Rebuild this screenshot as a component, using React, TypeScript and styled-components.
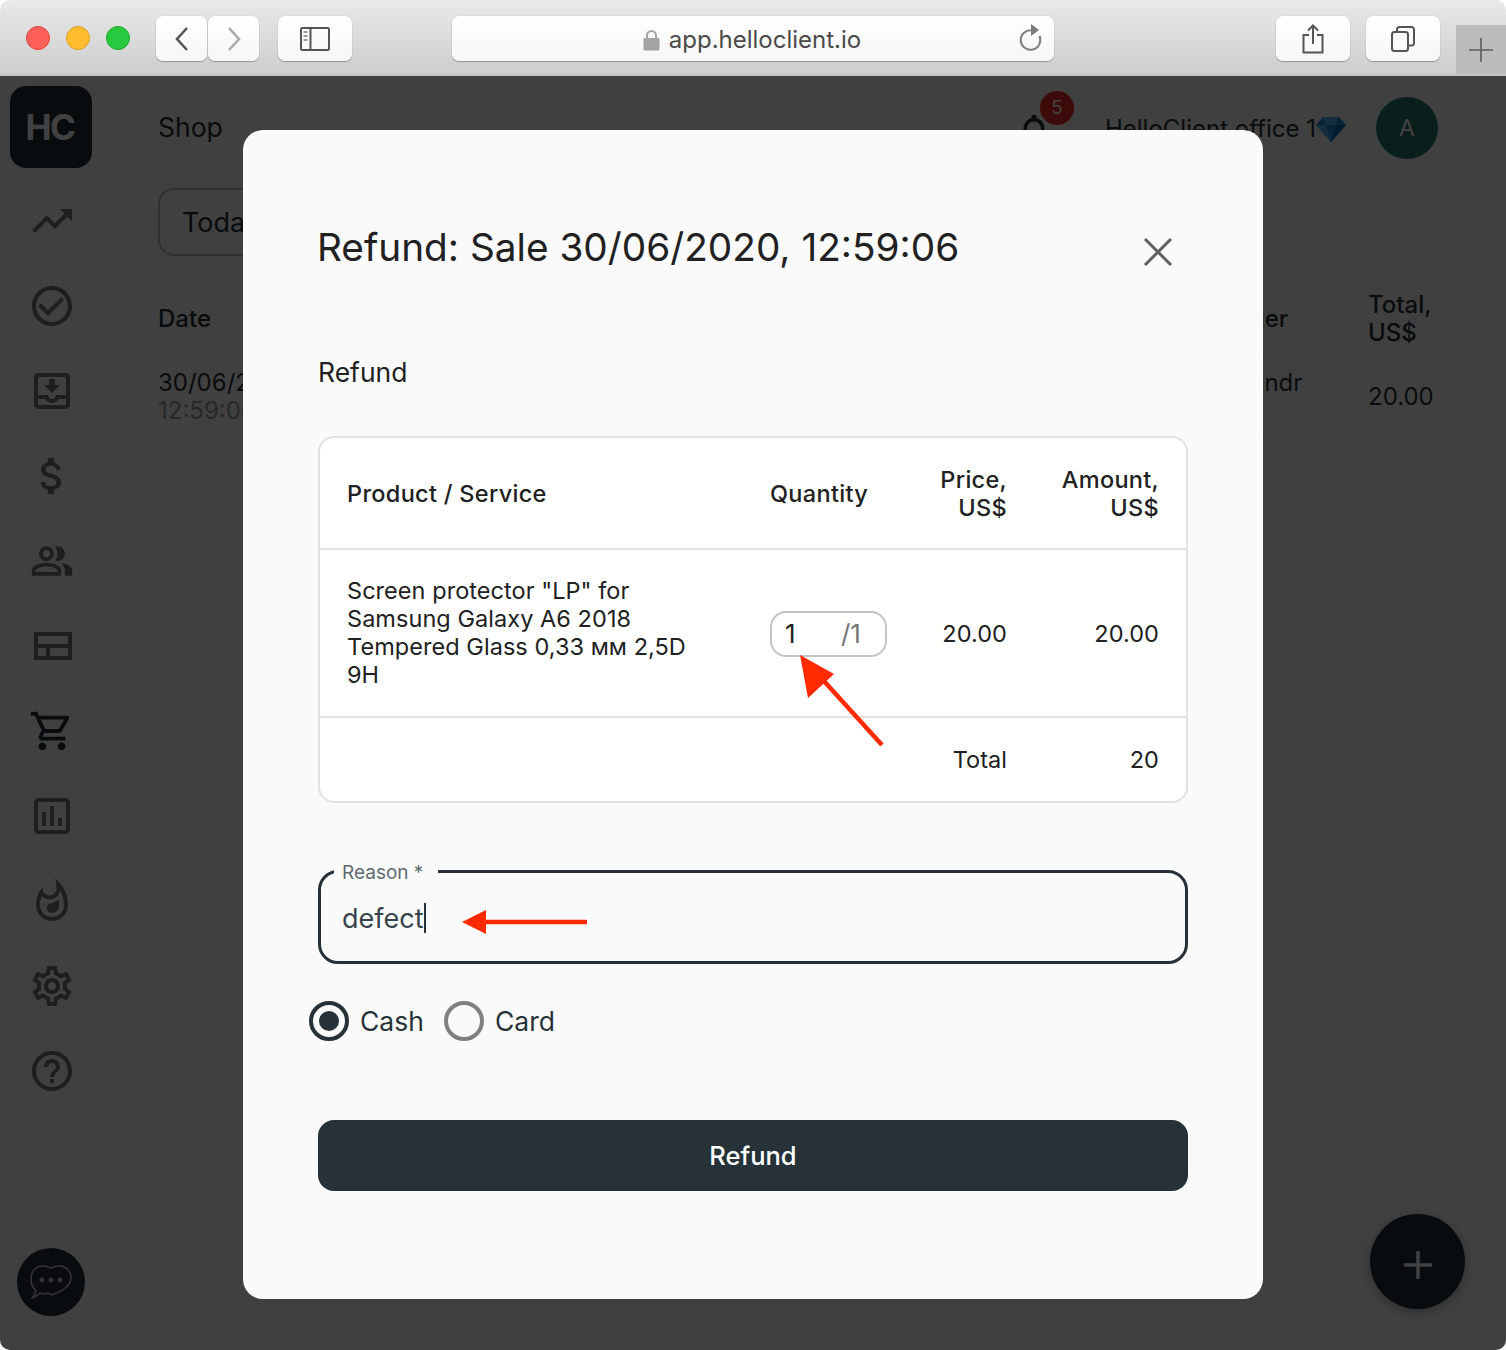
import React from 'react';
import styled, { createGlobalStyle } from 'styled-components';
import {
  MdTrendingUp,
  MdCheckCircleOutline,
  MdOutlineMoveToInbox,
  MdAttachMoney,
  MdOutlinePeopleAlt,
  MdOutlineShoppingCart,
  MdOutlineAssessment,
  MdOutlineWhatshot,
  MdOutlineSettings,
  MdHelpOutline,
  MdOutlineNotifications,
} from 'react-icons/md';

const GlobalStyle = createGlobalStyle`
  html, body {
    margin: 0;
    background: #fff;
  }
  * {
    box-sizing: border-box;
  }
`;

const BrowserWindow = styled.div`
  width: 1506px;
  height: 1350px;
  border-radius: 10px;
  overflow: hidden;
  display: flex;
  flex-direction: column;
  font-family: Inter, "Liberation Sans", sans-serif;
  color: #263238;
`;

const Toolbar = styled.div`
  height: 76px;
  flex: none;
  display: flex;
  align-items: flex-start;
  padding: 16px 0 0 26px;
  background: linear-gradient(#e9e9e9, #cdcdcd);
  border-bottom: 2px solid #c4c4c4;
`;

const Light = styled.span<{ $color: string; $edge: string }>`
  width: 24px;
  height: 24px;
  margin: 10px 16px 0 0;
  border-radius: 50%;
  background: ${({ $color }) => $color};
  border: 1px solid ${({ $edge }) => $edge};
`;

const ToolButton = styled.div<{ $width: number; $gap?: number }>`
  width: ${({ $width }) => $width}px;
  height: 45px;
  margin-left: ${({ $gap }) => $gap || 0}px;
  display: flex;
  align-items: center;
  justify-content: center;
  background: linear-gradient(#ffffff, #f6f6f6);
  border-radius: 7px;
  box-shadow: 0 1px 1px rgba(0, 0, 0, 0.28), 0 0 1px rgba(0, 0, 0, 0.25);
`;

const AddressBar = styled(ToolButton)`
  position: relative;
  gap: 9px;
  padding: 2px 2px 0 0;
  font-size: 24px;
  color: #4a4a4a;
`;

const Reload = styled.svg`
  position: absolute;
  right: 11px;
  top: 8px;
`;

const NewTab = styled.div`
  margin-left: auto;
  margin-top: 9px;
  width: 50px;
  height: 49px;
  display: flex;
  align-items: center;
  justify-content: center;
  background: #bcbcbc;
`;

const AppBody = styled.div`
  position: relative;
  flex: 1;
  display: flex;
  background: #fafafa;
`;

const Sidebar = styled.nav`
  width: 104px;
  flex: none;
  display: flex;
  flex-direction: column;
  align-items: center;
  padding: 10px 0 34px;
  border-right: 2px solid #f3f3f3;
`;

const Logo = styled.div`
  width: 82px;
  height: 82px;
  margin-bottom: 10px;
  padding-right: 2px;
  display: flex;
  align-items: center;
  justify-content: center;
  border-radius: 16px;
  background: #263238;
  color: #fff;
  font-size: 35px;
  font-weight: 700;
  letter-spacing: -1.5px;
`;

const NavItem = styled.div<{ $active?: boolean; $size: number }>`
  height: 85px;
  flex: none;
  display: flex;
  align-items: center;
  justify-content: center;
  margin-left: 2px;
  font-size: ${({ $size }) => $size}px;
  color: ${({ $active }) => ($active ? '#263238' : '#757575')};
`;

const ChatButton = styled.div`
  margin-top: auto;
  width: 68px;
  height: 68px;
  display: flex;
  align-items: center;
  justify-content: center;
  border-radius: 50%;
  background: #263238;
`;

const Main = styled.main`
  flex: 1;
  padding: 0 28px;
`;

const Header = styled.header`
  height: 103px;
  display: flex;
  align-items: center;
  padding: 0 40px 0 26px;
`;

const PageTitle = styled.div`
  font-size: 26.5px;
  flex: 1;
  margin-bottom: 2px;
`;

const Bell = styled.div`
  position: relative;
  font-size: 42px;
  height: 42px;
  margin-top: 6px;
  color: #263238;
`;

const BellBadge = styled.span`
  position: absolute;
  left: 27px;
  top: -19px;
  width: 34px;
  height: 34px;
  display: flex;
  align-items: center;
  justify-content: center;
  border-radius: 50%;
  background: #f02727;
  color: #fff;
  font-size: 19px;
`;

const Office = styled.div`
  display: flex;
  align-items: center;
  margin: 2px 0 0 50px;
  font-size: 24px;
`;

const Avatar = styled.div`
  width: 62px;
  height: 62px;
  margin-left: 30px;
  display: flex;
  align-items: center;
  justify-content: center;
  border-radius: 50%;
  background: #277a6e;
  color: #fff;
  font-size: 23px;
`;

const FilterBox = styled.div`
  width: 300px;
  height: 68px;
  margin: 9px 0 0 26px;
  padding: 0 22px;
  display: flex;
  align-items: center;
  border: 2px solid #bdbdbd;
  border-radius: 16px;
  font-size: 27px;
`;

const SalesRow = styled.div<{ $head?: boolean }>`
  display: grid;
  grid-template-columns: 1044px 166px 1fr;
  align-items: center;
  height: ${({ $head }) => ($head ? 102 : 80)}px;
  padding-left: 26px;
  border-bottom: 2px solid #eeeeee;
  font-size: 24px;
  line-height: 28px;
  font-weight: ${({ $head }) => ($head ? 500 : 400)};
`;

const Muted = styled.div`
  color: #9e9e9e;
`;

const HeadCell = styled.div`
  margin-top: 26px;
`;

const CustomerHead = styled(HeadCell)`
  margin-left: -26px;
`;

const CustomerCell = styled.div`
  align-self: start;
  margin-top: 11px;
`;

const Fab = styled.div`
  position: absolute;
  right: 41px;
  bottom: 41px;
  width: 95px;
  height: 95px;
  display: flex;
  align-items: center;
  justify-content: center;
  border-radius: 50%;
  background: #263238;
  box-shadow: 0 3px 12px rgba(0, 0, 0, 0.3);
`;

const FabPlus = styled.svg`
  margin-top: 7px;
`;

const Overlay = styled.div`
  position: absolute;
  inset: 0;
  display: flex;
  justify-content: center;
  align-items: flex-start;
  padding-top: 54px;
  background: rgba(0, 0, 0, 0.745);
`;

const Modal = styled.section`
  position: relative;
  width: 1020px;
  height: 1169px;
  padding: 0 75px;
  background: #fafafa;
  border-radius: 20px;
  overflow: hidden;
`;

const TitleRow = styled.div`
  display: flex;
  align-items: center;
  justify-content: space-between;
  height: 72px;
  margin-top: 80px;
  padding-right: 15px;
`;

const Title = styled.h2`
  margin: 0 0 0 -1px;
  font-size: 38.75px;
  font-weight: 400;
  color: #212121;
`;

const CloseIcon = styled.svg`
  margin-top: 11px;
`;

const SectionLabel = styled.div`
  margin-top: 70px;
  height: 40px;
  line-height: 40px;
  font-size: 26.5px;
  color: #212121;
`;

const RefundTable = styled.div`
  margin-top: 44px;
  width: 870px;
  border: 2px solid #e2e2e2;
  border-radius: 16px;
  background: #fff;
  font-size: 23.5px;
  line-height: 28px;
  color: #212121;
`;

const TableRow = styled.div<{ $height: number; $head?: boolean; $last?: boolean }>`
  display: grid;
  grid-template-columns: 423px 117px 120px 1fr;
  align-items: center;
  height: ${({ $height }) => $height}px;
  padding: ${({ $last }) => ($last ? 0 : 1)}px 27px 0 27px;
  border-bottom: ${({ $last }) => ($last ? 'none' : '2px solid #e2e2e2')};
  font-weight: ${({ $head }) => ($head ? 500 : 400)};
  letter-spacing: ${({ $head }) => ($head ? '0.3px' : '0.05px')};
`;

const ProductName = styled.div`
  width: 345px;
  margin-bottom: 2px;
`;

const NumberCell = styled.div`
  text-align: right;
`;

const TotalSpacer = styled.div`
  grid-column: 1 / span 2;
`;

const QuantityPill = styled.div`
  width: 117px;
  height: 46px;
  padding: 0 24px 0 13px;
  display: flex;
  align-items: center;
  justify-content: space-between;
  border: 2px solid #c4c4c4;
  border-radius: 16px;
  font-size: 26px;
`;

const QuantityMax = styled.span`
  color: #757575;
`;

const ReasonField = styled.fieldset`
  margin: 55px 0 0;
  width: 870px;
  height: 106px;
  padding: 0 21px;
  border: 3px solid #263238;
  border-radius: 20px;
`;

const ReasonLegend = styled.legend`
  margin-left: -8px;
  padding: 4px 15px 0 8px;
  font-size: 19px;
  line-height: 22px;
  color: #5f6b72;
`;

const ReasonValue = styled.div`
  display: flex;
  align-items: center;
  height: 36px;
  margin-top: 16px;
  font-size: 27px;
  color: #37444b;
`;

const Caret = styled.span`
  display: inline-block;
  width: 2px;
  height: 30px;
  margin-left: 1px;
  background: #263238;
`;

const RadioGroup = styled.div`
  display: flex;
  margin: 37px 0 0 -9px;
  height: 40px;
`;

const RadioOption = styled.label`
  display: flex;
  align-items: center;
  gap: 11px;
  margin-right: 20px;
  font-size: 26.5px;
`;

const RadioCircle = styled.span<{ $checked?: boolean }>`
  width: 40px;
  height: 40px;
  display: flex;
  align-items: center;
  justify-content: center;
  border-radius: 50%;
  border: 4px solid ${({ $checked }) => ($checked ? '#263238' : '#808080')};
  &::after {
    content: '';
    width: 20px;
    height: 20px;
    border-radius: 50%;
    background: ${({ $checked }) => ($checked ? '#263238' : 'transparent')};
  }
`;

const SubmitButton = styled.button`
  display: block;
  margin-top: 79px;
  width: 870px;
  height: 71px;
  border: none;
  border-radius: 16px;
  background: #263238;
  color: #fff;
  font-family: inherit;
  font-size: 25.5px;
  font-weight: 500;
`;

const QuantityArrow = styled.svg`
  position: absolute;
  left: 550px;
  top: 520px;
`;

const ReasonArrow = styled.svg`
  position: absolute;
  left: 215px;
  top: 775px;
`;

// the outlined material set has no version of this one with the short left cell
const LayoutIcon = () => (
  <svg width="1em" height="1em" viewBox="0 0 24 24">
    <path d="M4 6h17v12H4zM4 12h17M10 12v6" fill="none" stroke="currentColor" strokeWidth="2" />
  </svg>
);

const navIcons = [
  { Icon: MdTrendingUp, size: 48 },
  { Icon: MdCheckCircleOutline, size: 48 },
  { Icon: MdOutlineMoveToInbox, size: 48 },
  { Icon: MdAttachMoney, size: 48 },
  { Icon: MdOutlinePeopleAlt, size: 44 },
  { Icon: LayoutIcon, size: 48 },
  { Icon: MdOutlineShoppingCart, size: 46 },
  { Icon: MdOutlineAssessment, size: 48 },
  { Icon: MdOutlineWhatshot, size: 48 },
  { Icon: MdOutlineSettings, size: 48 },
  { Icon: MdHelpOutline, size: 48 },
];

const Gem = () => (
  <svg width="30" height="26" viewBox="0 0 30 26">
    <path d="M7 1h16l7 8-15 17L0 9z" fill="#1c8fd6" />
    <path d="M7 1l3 8h10l3-8zM0 9h10l5 17z" fill="#4cb4ee" />
    <path d="M20 9h10L15 26z" fill="#0e6eb0" />
  </svg>
);

const App = () => (
  <>
    <GlobalStyle />
    <BrowserWindow>
      <Toolbar>
        <Light $color="#fe5f57" $edge="#e0443e" />
        <Light $color="#ffbd2e" $edge="#dea123" />
        <Light $color="#28c940" $edge="#1aab29" />
        <ToolButton $width={51} $gap={10}>
          <svg width="16" height="26" viewBox="0 0 16 26">
            <path d="M13 2L3 13l10 11" fill="none" stroke="#555" strokeWidth="2.6" />
          </svg>
        </ToolButton>
        <ToolButton $width={51} $gap={1}>
          <svg width="16" height="26" viewBox="0 0 16 26">
            <path d="M3 2l10 11L3 24" fill="none" stroke="#ababab" strokeWidth="2.6" />
          </svg>
        </ToolButton>
        <ToolButton $width={74} $gap={19}>
          <svg width="30" height="24" viewBox="0 0 30 24">
            <rect x="1" y="1" width="28" height="22" rx="1.5" fill="none" stroke="#555" strokeWidth="2" />
            <path d="M10.5 1v22" stroke="#555" strokeWidth="2" />
            <path d="M3.5 5h4M3.5 9h4M3.5 13h4" stroke="#999" strokeWidth="2" />
          </svg>
        </ToolButton>
        <AddressBar $width={602} $gap={100}>
          <svg width="17" height="22" viewBox="0 0 17 22">
            <path d="M4 10V6.5a4.5 4.5 0 0 1 9 0V10" fill="none" stroke="#a3a3a3" strokeWidth="2" />
            <rect x="0.5" y="9" width="16" height="12.5" rx="1" fill="#a3a3a3" />
          </svg>
          app.helloclient.io
          <Reload width="26" height="28" viewBox="0 0 26 28">
            <path d="M15 6.3A9.8 9.8 0 1 0 22.5 12" fill="none" stroke="#7d7d7d" strokeWidth="2" />
            <path d="M14 0l8 6-8 6z" fill="#7d7d7d" />
          </Reload>
        </AddressBar>
        <ToolButton $width={74} $gap={222}>
          <svg width="22" height="30" viewBox="0 0 22 30">
            <path d="M7 11H1.5v17.5h19V11H15" fill="none" stroke="#555" strokeWidth="2" />
            <path d="M11 20V2M6 6.5L11 1.5l5 5" fill="none" stroke="#555" strokeWidth="2" />
          </svg>
        </ToolButton>
        <ToolButton $width={74} $gap={16}>
          <svg width="24" height="26" viewBox="0 0 24 26">
            <rect x="1" y="6" width="16" height="19" rx="2.5" fill="none" stroke="#555" strokeWidth="2" />
            <path d="M6 6V3.5A2.5 2.5 0 0 1 8.5 1h12A2.5 2.5 0 0 1 23 3.5V17a2.5 2.5 0 0 1-2.5 2.5H17" fill="none" stroke="#555" strokeWidth="2" />
          </svg>
        </ToolButton>
        <NewTab>
          <svg width="24" height="24" viewBox="0 0 24 24">
            <path d="M12 0v24M0 12h24" stroke="#5c5c5c" strokeWidth="1.6" />
          </svg>
        </NewTab>
      </Toolbar>
      <AppBody>
        <Sidebar>
          <Logo>HC</Logo>
          {navIcons.map(({ Icon, size }, i) => (
            <NavItem key={i} $size={size} $active={Icon === MdOutlineShoppingCart}>
              <Icon />
            </NavItem>
          ))}
          <ChatButton>
            <svg width="44" height="38" viewBox="0 0 44 38">
              <path
                d="M3 35c3-1 6-3 8-5 3 1 6 1 8 0l4 2c6-2 19-8 19-17C42 7 35 2 29 3c-2 0-5 1-7 2-2-1-5-2-8-2C7 3 2 8 2 16c0 5 2 9 5 12-1 3-2 5-4 7z"
                fill="none"
                stroke="#fff"
                strokeOpacity="0.75"
                strokeWidth="1.6"
                strokeLinejoin="round"
              />
              <circle cx="13" cy="17" r="2.4" fill="#fff" fillOpacity="0.75" />
              <circle cx="22" cy="17" r="2.4" fill="#fff" fillOpacity="0.75" />
              <circle cx="31" cy="17" r="2.4" fill="#fff" fillOpacity="0.75" />
            </svg>
          </ChatButton>
        </Sidebar>
        <Main>
          <Header>
            <PageTitle>Shop</PageTitle>
            <Bell>
              <MdOutlineNotifications />
              <BellBadge>5</BellBadge>
            </Bell>
            <Office>
              HelloClient office 1
              <Gem />
            </Office>
            <Avatar>A</Avatar>
          </Header>
          <FilterBox>Today</FilterBox>
          <SalesRow $head>
            <HeadCell>Date</HeadCell>
            <CustomerHead>Customer</CustomerHead>
            <HeadCell>
              Total,
              <br />
              US$
            </HeadCell>
          </SalesRow>
          <SalesRow>
            <div>
              30/06/2020
              <Muted>12:59:06</Muted>
            </div>
            <CustomerCell>Alexandr</CustomerCell>
            <div>20.00</div>
          </SalesRow>
        </Main>
        <Fab>
          <FabPlus width="30" height="30" viewBox="0 0 30 30">
            <path d="M15 1v28M1 15h28" stroke="#fff" strokeWidth="3.5" />
          </FabPlus>
        </Fab>
        <Overlay>
          <Modal>
            <TitleRow>
              <Title>Refund: Sale 30/06/2020, 12:59:06</Title>
              <CloseIcon width="30" height="30" viewBox="0 0 30 30">
                <path d="M2 2l26 26M28 2L2 28" stroke="#616161" strokeWidth="3" />
              </CloseIcon>
            </TitleRow>
            <SectionLabel>Refund</SectionLabel>
            <RefundTable>
              <TableRow $height={112} $head>
                <div>Product / Service</div>
                <div>Quantity</div>
                <NumberCell>
                  Price,
                  <br />
                  US$
                </NumberCell>
                <NumberCell>
                  Amount,
                  <br />
                  US$
                </NumberCell>
              </TableRow>
              <TableRow $height={168}>
                <ProductName>Screen protector "LP" for Samsung Galaxy A6 2018 Tempered Glass 0,33 мм 2,5D 9H</ProductName>
                <QuantityPill>
                  1<QuantityMax>/1</QuantityMax>
                </QuantityPill>
                <NumberCell>20.00</NumberCell>
                <NumberCell>20.00</NumberCell>
              </TableRow>
              <TableRow $height={83} $last>
                <TotalSpacer />
                <NumberCell>Total</NumberCell>
                <NumberCell>20</NumberCell>
              </TableRow>
            </RefundTable>
            <ReasonField>
              <ReasonLegend>Reason *</ReasonLegend>
              <ReasonValue>
                defect
                <Caret />
              </ReasonValue>
            </ReasonField>
            <RadioGroup>
              <RadioOption>
                <RadioCircle $checked />
                Cash
              </RadioOption>
              <RadioOption>
                <RadioCircle />
                Card
              </RadioOption>
            </RadioGroup>
            <SubmitButton>Refund</SubmitButton>
            <QuantityArrow width="100" height="100" viewBox="0 0 100 100">
              <path d="M89 95L20 19" stroke="#ff2a00" strokeWidth="4.5" />
              <path d="M7 5l34 19-26 24z" fill="#ff2a00" />
            </QuantityArrow>
            <ReasonArrow width="135" height="34" viewBox="0 0 135 34">
              <path d="M20 17h109" stroke="#ff2a00" strokeWidth="4.5" />
              <path d="M4 17l24-12v24z" fill="#ff2a00" />
            </ReasonArrow>
          </Modal>
        </Overlay>
      </AppBody>
    </BrowserWindow>
  </>
);

export default App;
